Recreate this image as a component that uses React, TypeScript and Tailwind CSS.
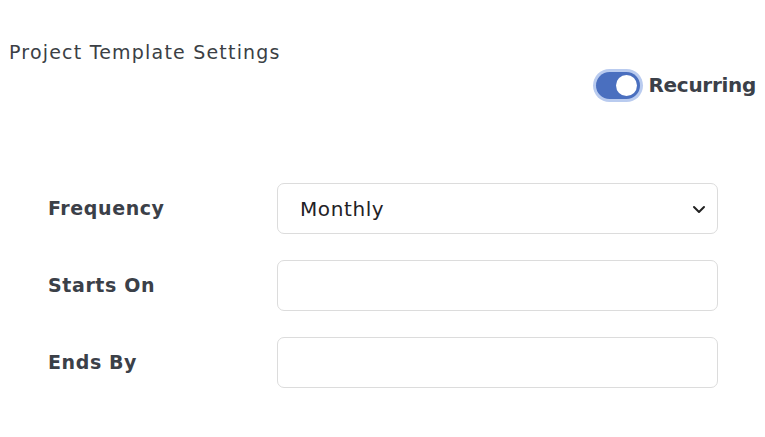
import React from "react";

export default function App() {
  return (
    <div className="w-[765px] h-[437px] bg-white overflow-hidden" style={{ fontFamily: '"DejaVu Sans", "Open Sans", sans-serif' }}>
      <div className="pl-[9px] pt-[38px] text-[19px] leading-[28px] tracking-[1.2px] text-[#3b3f45]">Project Template Settings</div>
      <div className="flex justify-end items-center gap-[9px] pr-[9px] mt-[4px]">
        <div className="w-[44px] h-[27px] rounded-full bg-[#4a6fbf] ring-[3px] ring-[#b9cbef] flex items-center justify-end pr-[3px]">
          <div className="w-[21px] h-[21px] rounded-full bg-white" />
        </div>
        <span className="text-[20px] font-bold tracking-[-0.3px] text-[#3b4048]">Recurring</span>
      </div>
      <div className="mt-[83px] flex flex-col gap-[26px] pl-[48px] pr-[47px]">
        <div className="flex items-center">
          <div className="w-[229px] text-[19px] font-bold tracking-[0.6px] text-[#3b4048]">Frequency</div>
          <div className="flex-1 h-[51px] border border-[#dcdcdc] rounded-[7px] flex items-center justify-between pl-[22px] pr-[11px]">
            <span className="text-[20px] tracking-[0.6px] text-[#1f2226]">Monthly</span>
            <svg width="14" height="10" viewBox="0 0 14 10" fill="none" stroke="#222" strokeWidth="2" strokeLinecap="round" strokeLinejoin="round">
              <path d="M2 3l5 5 5-5" />
            </svg>
          </div>
        </div>
        <div className="flex items-center">
          <div className="w-[229px] text-[19px] font-bold tracking-[0.6px] text-[#3b4048]">Starts On</div>
          <div className="flex-1 h-[51px] border border-[#dcdcdc] rounded-[7px]" />
        </div>
        <div className="flex items-center">
          <div className="w-[229px] text-[19px] font-bold tracking-[0.6px] text-[#3b4048]">Ends By</div>
          <div className="flex-1 h-[51px] border border-[#dcdcdc] rounded-[7px]" />
        </div>
      </div>
    </div>
  );
}
